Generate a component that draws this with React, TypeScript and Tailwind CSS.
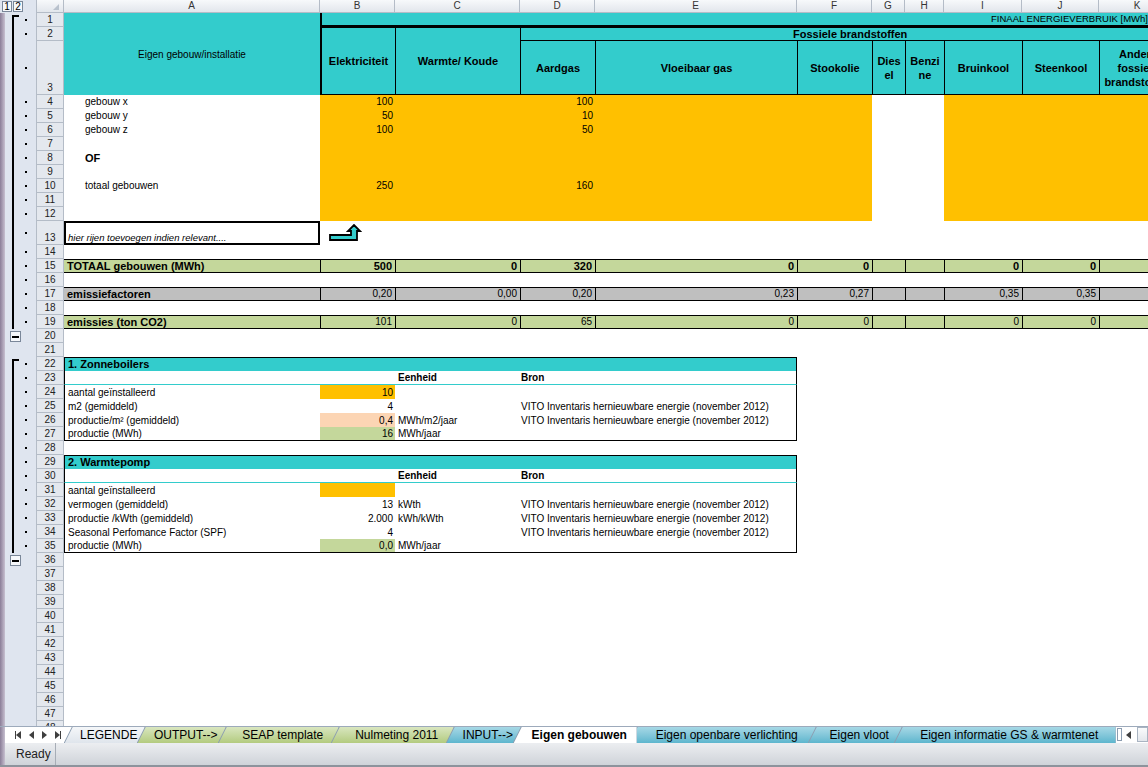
import React from "react";

type GK = "start" | "line" | "minus" | "empty";

const COLW = ["w-[75px]", "w-[125px]", "w-[75px]", "w-[202px]", "w-[75px]", "w-[33px]", "w-[39px]", "w-[78px]", "w-[77px]", "w-[77px]"];
const LETTERS = ["B", "C", "D", "E", "F", "G", "H", "I", "J", "K"];

function Gutter({ kind }: { kind: GK }) {
  return (
    <div className="w-[36px] shrink-0 h-full flex bg-[#dfe5ef]">
      <div className="w-[5px] h-full bg-linear-to-r from-[#8b7e98] to-[#c7c0d0]" />
      {kind === "minus" && (
        <>
          <div className="w-[5px]" />
          <div className="w-[11px] h-[11px] mt-[2px] border border-[#7a8799] bg-[#f5f7fa] flex items-center justify-center">
            <div className="w-[7px] h-[2px] bg-black" />
          </div>
        </>
      )}
      {(kind === "start" || kind === "line") && (
        <>
          <div className="w-[7px]" />
          <div className="w-[2px] h-full flex flex-col items-start">
            {kind === "start" && <div className="h-[2px] shrink-0" />}
            {kind === "start" && <div className="w-[7px] h-[2px] shrink-0 bg-black" />}
            <div className="w-[2px] flex-1 bg-black" />
          </div>
          <div className="w-[11px]" />
          <div className="w-[2px] h-full flex items-center">
            <div className="w-[2px] h-[2px] bg-black" />
          </div>
        </>
      )}
    </div>
  );
}

function RowHead({ n }: { n: number }) {
  return (
    <div className="w-[28px] shrink-0 h-full flex items-end justify-center bg-[#e4e8ee] border-x border-b border-[#b4bcc7] text-[10px] leading-[13px] text-[#222]">
      {n}
    </div>
  );
}

function Row({ n, h = "h-[14px]", g = "empty", children }: { n: number; h?: string; g?: GK; children?: React.ReactNode }) {
  return (
    <div className={`flex shrink-0 ${h}`}>
      <Gutter kind={g} />
      <RowHead n={n} />
      <div className="flex flex-1 min-w-0 h-full">{children}</div>
    </div>
  );
}

function DataRow({ n, label, b, d, bold }: { n: number; label?: string; b?: string; d?: string; bold?: boolean }) {
  return (
    <Row n={n} g="line">
      <div className={`w-[256px] shrink-0 pl-[21px] leading-[14px] ${bold ? "font-bold text-[11px]" : "text-[10px]"}`}>{label}</div>
      <div className="w-[75px] shrink-0 bg-[#ffc000] text-right pr-[2px] text-[10px] leading-[14px]">{b}</div>
      <div className="w-[125px] shrink-0 bg-[#ffc000]" />
      <div className="w-[75px] shrink-0 bg-[#ffc000] text-right pr-[2px] text-[10px] leading-[14px]">{d}</div>
      <div className="w-[277px] shrink-0 bg-[#ffc000]" />
      <div className="w-[72px] shrink-0" />
      <div className="w-[232px] shrink-0 bg-[#ffc000]" />
    </Row>
  );
}

function SumRow({ n, label, v, bg, bold }: { n: number; label: string; v: string[]; bg: string; bold?: boolean }) {
  return (
    <Row n={n} g="line">
      <div className={`flex flex-1 min-w-0 border-y border-black ${bg} ${bold ? "font-bold text-[11px]" : "text-[10px]"}`}>
        <div className="w-[256px] shrink-0 pl-[3px] font-bold text-[11px] leading-[12px]">{label}</div>
        {COLW.map((w, i) => (
          <div key={i} className={`${w} shrink-0 border-l border-black text-right pr-[3px] leading-[12px]`}>
            {v[i]}
          </div>
        ))}
      </div>
    </Row>
  );
}

type SecKind = "head" | "sub" | "data";

function SecRow({ n, kind = "data", label, b, bBg = "", c, d, last }: { n: number; kind?: SecKind; label?: string; b?: string; bBg?: string; c?: string; d?: string; last?: boolean }) {
  const box = kind === "head" ? "border-t bg-[#33cccc]" : kind === "sub" ? "border-b border-b-[#33cccc]" : last ? "border-b" : "";
  return (
    <Row n={n} g="line">
      <div className={`w-[733px] shrink-0 h-full flex border-x border-black ${box}`}>
        {kind === "head" ? (
          <div className="pl-[3px] flex items-center font-bold text-[11px]">{label}</div>
        ) : (
          <>
            <div className="w-[255px] shrink-0 pl-[3px] flex items-center text-[10px] whitespace-nowrap">{label}</div>
            <div className={`w-[75px] shrink-0 flex items-center justify-end pr-[2px] text-[10px] ${bBg}`}>{b}</div>
            <div className={`w-[125px] shrink-0 pl-[3px] flex items-center text-[10px] ${kind === "sub" ? "font-bold" : ""}`}>{c}</div>
            <div className={`w-[75px] shrink-0 pl-[1px] flex items-center text-[10px] whitespace-nowrap ${kind === "sub" ? "font-bold" : ""}`}>{d}</div>
            <div className="flex-1" />
          </>
        )}
      </div>
    </Row>
  );
}

function ColHeader() {
  return (
    <div className="flex h-[13px] shrink-0">
      <div className="w-[36px] shrink-0 h-full flex bg-[#dfe5ef] pl-[2px] gap-[1px]">
        <div className="w-[10px] h-[11px] mt-[1px] border border-[#7a8799] bg-[#f5f7fa] text-[10px] leading-[9px] text-center">1</div>
        <div className="w-[10px] h-[11px] mt-[1px] border border-[#7a8799] bg-[#f5f7fa] text-[10px] leading-[9px] text-center">2</div>
      </div>
      <div className="w-[28px] shrink-0 h-full border-x border-b border-[#b4bcc7] bg-linear-to-b from-[#f7f9fb] to-[#e2e6ec] flex items-end justify-end pr-[4px] pb-[2px]">
        <svg width="6" height="6" viewBox="0 0 6 6">
          <path d="M6 0V6H0Z" fill="#b9c2cd" />
        </svg>
      </div>
      <div className="w-[256px] shrink-0 h-full border-r border-b border-[#b4bcc7] bg-linear-to-b from-[#f7f9fb] to-[#e2e6ec] text-center text-[10px] leading-[12px] text-[#333]">A</div>
      {COLW.map((w, i) => (
        <div key={i} className={`${w} shrink-0 h-full border-r border-b border-[#b4bcc7] bg-linear-to-b from-[#f7f9fb] to-[#e2e6ec] text-center text-[10px] leading-[12px] text-[#333]`}>
          {LETTERS[i]}
        </div>
      ))}
    </div>
  );
}

function HeaderBlock() {
  const sub = [
    { w: "w-[74px]", t: "Aardgas" },
    { w: "w-[202px]", t: "Vloeibaar gas" },
    { w: "w-[75px]", t: "Stookolie" },
    { w: "w-[33px]", t: "Dies\nel" },
    { w: "w-[39px]", t: "Benzi\nne" },
    { w: "w-[78px]", t: "Bruinkool" },
    { w: "w-[77px]", t: "Steenkool" },
    { w: "w-[77px]", t: "Andere fossiele brandstoffen" },
  ];
  return (
    <div className="flex h-[82px] shrink-0">
      <div className="flex flex-col shrink-0">
        <div className="flex h-[14px]">
          <Gutter kind="start" />
          <RowHead n={1} />
        </div>
        <div className="flex h-[14px]">
          <Gutter kind="line" />
          <RowHead n={2} />
        </div>
        <div className="flex h-[54px]">
          <Gutter kind="line" />
          <RowHead n={3} />
        </div>
      </div>
      <div className="w-[256px] shrink-0 bg-[#33cccc] flex items-center justify-center text-[10px]">Eigen gebouw/installatie</div>
      <div className="flex flex-col flex-1 min-w-0 border-l-2 border-black bg-[#33cccc]">
        <div className="h-[15px] shrink-0 border-b-[3px] border-black flex items-center justify-end text-[9.5px] whitespace-nowrap">
          FINAAL ENERGIEVERBRUIK [MWh]
        </div>
        <div className="flex flex-1 border-b border-black font-bold text-[11px]">
          <div className="w-[73px] shrink-0 flex items-center justify-center">Elektriciteit</div>
          <div className="w-[125px] shrink-0 border-l border-black flex items-center justify-center">Warmte/ Koude</div>
          <div className="flex flex-col flex-1 border-l border-black">
            <div className="h-[13px] shrink-0 border-b border-black pl-[272px] leading-[12px] whitespace-nowrap">Fossiele brandstoffen</div>
            <div className="flex flex-1">
              {sub.map((s, i) => (
                <div
                  key={i}
                  className={`${s.w} shrink-0 ${i > 0 ? "border-l border-black" : ""} flex items-center justify-center text-center leading-[14px] whitespace-pre-line px-[1px]`}
                >
                  {s.t}
                </div>
              ))}
            </div>
          </div>
        </div>
      </div>
    </div>
  );
}

function Tri({ dir }: { dir: "l" | "r" }) {
  return (
    <svg width="5" height="8" viewBox="0 0 5 8">
      <path d={dir === "l" ? "M5 0V8L0 4Z" : "M0 0V8L5 4Z"} fill="#3f3f3f" />
    </svg>
  );
}

const TABS = [
  { t: "LEGENDE", w: "w-[81px]", c: "bg-linear-to-b from-[#f5f7f9] to-[#dfe5ec]" },
  { t: "OUTPUT-->", w: "w-[89px]", c: "bg-linear-to-b from-[#d9e6bf] to-[#b3cb7f]" },
  { t: "SEAP template", w: "w-[121px]", c: "bg-linear-to-b from-[#d9e6bf] to-[#b3cb7f]" },
  { t: "Nulmeting 2011", w: "w-[123px]", c: "bg-linear-to-b from-[#d9e6bf] to-[#b3cb7f]" },
  { t: "INPUT-->", w: "w-[75px]", c: "bg-linear-to-b from-[#a6d8e6] to-[#5db6ce]" },
  { t: "Eigen gebouwen", w: "w-[124px]", c: "bg-white font-bold", active: true },
  { t: "Eigen openbare verlichting", w: "w-[187px]", c: "bg-linear-to-b from-[#a6d8e6] to-[#5db6ce]" },
  { t: "Eigen vloot", w: "w-[94px]", c: "bg-linear-to-b from-[#a6d8e6] to-[#5db6ce]" },
  { t: "Eigen informatie GS & warmtenet", w: "w-[222px]", c: "bg-linear-to-b from-[#a6d8e6] to-[#5db6ce]" },
];

function TabBar() {
  return (
    <div className="flex h-[17px] shrink-0 bg-white border-t border-[#9daabb]">
      <div className="w-[5px] h-full bg-linear-to-r from-[#8b7e98] to-[#c7c0d0]" />
      <div className="w-[59px] shrink-0 flex items-center pl-[10px] gap-[8px]">
        <div className="flex items-center">
          <div className="w-[1px] h-[8px] bg-[#3f3f3f]" />
          <Tri dir="l" />
        </div>
        <Tri dir="l" />
        <Tri dir="r" />
        <div className="flex items-center">
          <Tri dir="r" />
          <div className="w-[1px] h-[8px] bg-[#3f3f3f]" />
        </div>
      </div>
      <div className="flex h-full">
        {TABS.map((tab, i) => (
          <div
            key={i}
            className={`${tab.w} shrink-0 h-full ${i > 0 ? "-ml-[8px]" : ""} ${tab.active ? "relative z-10" : ""} bg-[#8c9db1] [clip-path:polygon(8px_0,100%_0,100%_100%,0_100%)]`}
          >
            <div
              className={`h-full ml-[1px] ${tab.c} [clip-path:polygon(8px_0,100%_0,100%_100%,0_100%)] flex items-center justify-center pl-[8px] text-[12px] leading-none whitespace-nowrap text-black`}
            >
              {tab.t}
            </div>
          </div>
        ))}
      </div>
      <div className="w-[5px] h-[13px] mt-[1px] ml-[1px] border border-[#8c9db1] bg-white" />
      <div className="ml-[4px] flex items-center">
        <Tri dir="l" />
      </div>
      <div className="ml-[6px] w-[12px] h-[15px] border border-[#a9b4c2] bg-linear-to-b from-[#fafbfc] to-[#e3e7ec]" />
    </div>
  );
}

function StatusBar() {
  return (
    <div className="flex h-[24px] shrink-0 bg-linear-to-b from-[#eceef1] to-[#cfd3d9] border-b-2 border-[#8d939c]">
      <div className="w-[5px] h-full bg-linear-to-r from-[#8b7e98] to-[#c7c0d0]" />
      <div className="w-[51px] shrink-0 h-full border-r border-[#a7adb6] flex items-center pl-[11px] text-[12px] text-[#222]">Ready</div>
    </div>
  );
}

export default function App() {
  const empties = [37, 38, 39, 40, 41, 42, 43, 44, 45, 46, 47, 48];
  return (
    <div className="w-[1148px] h-[767px] overflow-hidden flex flex-col bg-white text-black font-['Liberation_Sans',Arial,sans-serif]">
      <div className="h-[726px] shrink-0 overflow-hidden flex flex-col">
        <ColHeader />
        <HeaderBlock />
        <DataRow n={4} label="gebouw x" b="100" d="100" />
        <DataRow n={5} label="gebouw y" b="50" d="10" />
        <DataRow n={6} label="gebouw z" b="100" d="50" />
        <DataRow n={7} />
        <DataRow n={8} label="OF" bold />
        <DataRow n={9} />
        <DataRow n={10} label="totaal gebouwen" b="250" d="160" />
        <DataRow n={11} />
        <DataRow n={12} />
        <Row n={13} h="h-[24px]" g="line">
          <div className="w-[256px] shrink-0 h-full border-2 border-black flex items-end pl-[2px] italic text-[9.5px] leading-[11px] whitespace-nowrap">
            hier rijen toevoegen indien relevant....
          </div>
          <div className="w-[75px] shrink-0 pl-[8px] pt-[3px]">
            <svg width="34" height="18" viewBox="0 0 34 18">
              <path d="M2 11H23V7H20L26 1L32 7H29V16H2Z" fill="#33cccc" stroke="#000" strokeWidth="1.8" />
            </svg>
          </div>
        </Row>
        <Row n={14} g="line" />
        <SumRow n={15} label="TOTAAL gebouwen (MWh)" bold bg="bg-[#c4d79b]" v={["500", "0", "320", "0", "0", "", "", "0", "0", ""]} />
        <Row n={16} g="line" />
        <SumRow n={17} label="emissiefactoren" bg="bg-[#bfbfbf]" v={["0,20", "0,00", "0,20", "0,23", "0,27", "", "", "0,35", "0,35", ""]} />
        <Row n={18} g="line" />
        <SumRow n={19} label="emissies (ton CO2)" bg="bg-[#c4d79b]" v={["101", "0", "65", "0", "0", "", "", "0", "0", ""]} />
        <Row n={20} g="minus" />
        <Row n={21} />
        <Row n={22} g="start">
          <div className="w-[733px] shrink-0 h-full flex items-center border-x border-t border-black bg-[#33cccc] pl-[3px] font-bold text-[11px]">
            1. Zonneboilers
          </div>
        </Row>
        <SecRow n={23} kind="sub" c="Eenheid" d="Bron" />
        <SecRow n={24} label="aantal geïnstalleerd" b="10" bBg="bg-[#ffc000]" />
        <SecRow n={25} label="m2 (gemiddeld)" b="4" d="VITO Inventaris hernieuwbare energie (november 2012)" />
        <SecRow n={26} label="productie/m² (gemiddeld)" b="0,4" bBg="bg-[#fcd5b4]" c="MWh/m2/jaar" d="VITO Inventaris hernieuwbare energie (november 2012)" />
        <SecRow n={27} label="productie (MWh)" b="16" bBg="bg-[#c4d79b]" c="MWh/jaar" last />
        <Row n={28} g="line" />
        <SecRow n={29} kind="head" label="2. Warmtepomp" />
        <SecRow n={30} kind="sub" c="Eenheid" d="Bron" />
        <SecRow n={31} label="aantal geïnstalleerd" bBg="bg-[#ffc000]" />
        <SecRow n={32} label="vermogen (gemiddeld)" b="13" c="kWth" d="VITO Inventaris hernieuwbare energie (november 2012)" />
        <SecRow n={33} label="productie /kWth (gemiddeld)" b="2.000" c="kWh/kWth" d="VITO Inventaris hernieuwbare energie (november 2012)" />
        <SecRow n={34} label="Seasonal Perfomance Factor (SPF)" b="4" d="VITO Inventaris hernieuwbare energie (november 2012)" />
        <SecRow n={35} label="productie (MWh)" b="0,0" bBg="bg-[#c4d79b]" c="MWh/jaar" last />
        <Row n={36} g="minus" />
        {empties.map((n) => (
          <Row key={n} n={n} />
        ))}
      </div>
      <TabBar />
      <StatusBar />
    </div>
  );
}
